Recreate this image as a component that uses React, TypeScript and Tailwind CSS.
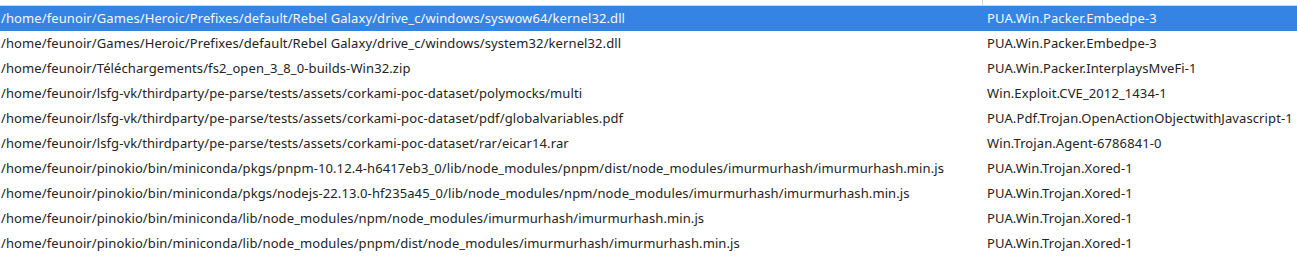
import React from "react";

type Detection = {
  path: string;
  signature: string;
};

const detections: Detection[] = [
  {
    path: "/home/feunoir/Games/Heroic/Prefixes/default/Rebel Galaxy/drive_c/windows/syswow64/kernel32.dll",
    signature: "PUA.Win.Packer.Embedpe-3",
  },
  {
    path: "/home/feunoir/Games/Heroic/Prefixes/default/Rebel Galaxy/drive_c/windows/system32/kernel32.dll",
    signature: "PUA.Win.Packer.Embedpe-3",
  },
  {
    path: "/home/feunoir/Téléchargements/fs2_open_3_8_0-builds-Win32.zip",
    signature: "PUA.Win.Packer.InterplaysMveFi-1",
  },
  {
    path: "/home/feunoir/lsfg-vk/thirdparty/pe-parse/tests/assets/corkami-poc-dataset/polymocks/multi",
    signature: "Win.Exploit.CVE_2012_1434-1",
  },
  {
    path: "/home/feunoir/lsfg-vk/thirdparty/pe-parse/tests/assets/corkami-poc-dataset/pdf/globalvariables.pdf",
    signature: "PUA.Pdf.Trojan.OpenActionObjectwithJavascript-1",
  },
  {
    path: "/home/feunoir/lsfg-vk/thirdparty/pe-parse/tests/assets/corkami-poc-dataset/rar/eicar14.rar",
    signature: "Win.Trojan.Agent-6786841-0",
  },
  {
    path: "/home/feunoir/pinokio/bin/miniconda/pkgs/pnpm-10.12.4-h6417eb3_0/lib/node_modules/pnpm/dist/node_modules/imurmurhash/imurmurhash.min.js",
    signature: "PUA.Win.Trojan.Xored-1",
  },
  {
    path: "/home/feunoir/pinokio/bin/miniconda/pkgs/nodejs-22.13.0-hf235a45_0/lib/node_modules/npm/node_modules/imurmurhash/imurmurhash.min.js",
    signature: "PUA.Win.Trojan.Xored-1",
  },
  {
    path: "/home/feunoir/pinokio/bin/miniconda/lib/node_modules/npm/node_modules/imurmurhash/imurmurhash.min.js",
    signature: "PUA.Win.Trojan.Xored-1",
  },
  {
    path: "/home/feunoir/pinokio/bin/miniconda/lib/node_modules/pnpm/dist/node_modules/imurmurhash/imurmurhash.min.js",
    signature: "PUA.Win.Trojan.Xored-1",
  },
];

export default function App() {
  return (
    <div className="w-[1297px] h-[259px] bg-white overflow-hidden font-['Noto_Sans',sans-serif] text-[13px] tracking-[0.1px] text-[#232323]">
      {/* header stub, mostly scrolled out of view */}
      <div className="flex h-[6px] border-b border-[#d4d4d4]">
        <div className="w-[983px] border-r border-[#d4d4d4]" />
        <div className="flex-1" />
      </div>

      <div className="flex flex-col">
        {detections.map((d, i) => (
          <div
            key={i}
            className={`flex h-[25px] pt-[1px] items-center whitespace-nowrap ${
              i === 0 ? "bg-[#3584e4] text-[#f4f8fd]" : ""
            }`}
          >
            <div className="w-[983px] overflow-hidden pl-[1px]">{d.path}</div>
            <div className="flex-1 pl-[4px] overflow-hidden">{d.signature}</div>
          </div>
        ))}
      </div>
    </div>
  );
}
